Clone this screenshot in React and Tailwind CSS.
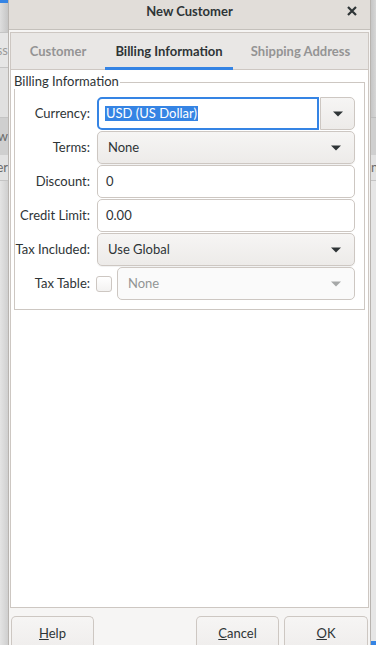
const Arrow = ({ disabled }) => (
  <svg width="10" height="6" viewBox="0 0 10 6" className="shrink-0">
    <path d="M0 0.5 L10 0.5 L5 5.5 Z" fill={disabled ? "#a6a8a8" : "#2e3436"} />
  </svg>
);

function Label({ children }) {
  return (
    <div className="h-[33px] flex items-center justify-end pr-[1px] text-[#2e3436] whitespace-nowrap">
      {children}
    </div>
  );
}

function Entry({ value }) {
  return (
    <div className="h-[33px] flex items-center rounded-[5px] border border-[#cdc7c2] bg-white pl-[8px] text-[#2e3436]">
      {value}
    </div>
  );
}

function Combo({ value, disabled }) {
  return (
    <div
      className={
        "h-[33px] flex items-center justify-between rounded-[5px] border border-[#cdc7c2] pl-[10px] pr-[13px] " +
        (disabled
          ? "bg-[#fafafa] text-[#929595]"
          : "bg-gradient-to-b from-[#f6f5f4] to-[#edebe9] text-[#2e3436] shadow-[0_1px_1px_rgba(0,0,0,0.06)]")
      }
    >
      <span>{value}</span>
      <Arrow disabled={disabled} />
    </div>
  );
}

function Btn({ children, w }) {
  return (
    <div
      className={
        "h-[34px] flex items-center justify-center rounded-t-[5px] border border-b-0 border-[#cdc7c2] bg-gradient-to-b from-[#f6f5f4] to-[#efedec] text-[#2e3436] " +
        w
      }
    >
      {children}
    </div>
  );
}

export default function App() {
  return (
    <div className="w-[376px] h-[645px] overflow-hidden flex bg-[#dcdcdc] font-['Lato',sans-serif] text-[13px] leading-[15px]">
      {/* background window, left */}
      <div className="w-[8px] shrink-0 flex flex-col bg-gradient-to-r from-[#d6d6d6] to-[#c9c9c9]">
        <div className="h-[3px] bg-[#3584e4]" />
        <div className="h-[29px] bg-gradient-to-r from-[#dedede] to-[#c6c6c6]" />
        <div className="h-[36px] border-y border-[#c4c4c4] bg-[#e6e6e6] flex items-center justify-end overflow-hidden text-[#9a9a9a]">
          <span className="whitespace-nowrap">ss</span>
        </div>
        <div className="h-[50px] bg-[#e0e0e0] border-b border-[#c4c4c4]" />
        <div className="h-[37px] bg-[#cfcfcf] flex items-center justify-end overflow-hidden text-[#6a6a6a]">
          <span className="whitespace-nowrap">ow</span>
        </div>
        <div className="h-[26px] bg-[#e2e2e2] border-b border-[#c4c4c4] flex items-center justify-end overflow-hidden text-[#6a6a6a]">
          <span className="whitespace-nowrap">er</span>
        </div>
        <div className="flex-1 bg-gradient-to-r from-[#e4e4e4] to-[#cfcfcf]" />
      </div>

      {/* dialog */}
      <div className="w-[363px] shrink-0 flex flex-col border-x border-[#b8b4b0] bg-[#f6f5f4]">
        <div className="h-[30px] shrink-0 grid grid-cols-[1fr_auto_1fr] items-center bg-[#e1ddd9] border-b border-[#c4c0bb] pb-[7px]">
          <div />
          <div className="font-bold text-[#2e3436]">New Customer</div>
          <div className="flex justify-end pr-[13px]">
            <svg width="10" height="10" viewBox="0 0 10 10">
              <path d="M1 1 L9 9 M9 1 L1 9" stroke="#2e3436" strokeWidth="2.2" />
            </svg>
          </div>
        </div>

        <div className="pt-[2px] px-[1px]">
          <div className="h-[576px] flex flex-col border border-[#cdc7c2]">
            <div className="h-[37px] shrink-0 flex bg-[#e9e7e5] font-bold">
              <div className="w-[94px] flex items-center justify-center border-b border-[#cdc7c2] text-[#949494]">
                Customer
              </div>
              <div className="w-[128px] flex items-center justify-center border-b-[3px] border-[#3584e4] text-[#2e3436] pt-[2px]">
                Billing Information
              </div>
              <div className="flex-1 flex items-center justify-center border-b border-[#cdc7c2] text-[#949494]">
                Shipping Address
              </div>
            </div>

            <div className="flex-1 bg-white pt-[4px] px-[3px]">
              <div className="flex items-stretch">
                <div className="text-[#2e3436] leading-[15px] h-[15px] pr-[1px]">Billing Information</div>
                <div className="flex-1 mt-[8px] border-t border-r border-[#cdc7c2]" />
              </div>
              <div className="border-x border-b border-[#cdc7c2] pt-[8px] pb-[9px] pr-[9px]">
                <div className="grid grid-cols-[76px_1fr] gap-x-[6px] gap-y-[1px]">
                  <Label>Currency:</Label>
                  <div className="h-[33px] flex">
                    <div className="flex-1 flex items-center rounded-l-[5px] border-2 border-[#3584e4] bg-white pl-[6px]">
                      <span className="bg-[#3584e4] text-white px-[1px]">USD (US Dollar)</span>
                    </div>
                    <div className="w-[35px] ml-[1px] flex items-center justify-center rounded-r-[5px] border border-[#cdc7c2] bg-gradient-to-b from-[#f6f5f4] to-[#edebe9]">
                      <Arrow />
                    </div>
                  </div>

                  <Label>Terms:</Label>
                  <Combo value="None" />

                  <Label>Discount:</Label>
                  <Entry value="0" />

                  <Label>Credit Limit:</Label>
                  <Entry value="0.00" />

                  <Label>Tax Included:</Label>
                  <Combo value="Use Global" />

                  <Label>Tax Table:</Label>
                  <div className="flex items-center gap-[5px] -ml-[1px]">
                    <div className="w-[16px] h-[16px] shrink-0 rounded-[3px] border border-[#cdc7c2] bg-gradient-to-b from-white to-[#f3f2f1]" />
                    <div className="flex-1">
                      <Combo value="None" disabled />
                    </div>
                  </div>
                </div>
              </div>
            </div>
          </div>
        </div>

        <div className="pt-[8px] px-[2px] flex">
          <Btn w="w-[83px]">
            <span><span className="underline">H</span>elp</span>
          </Btn>
          <div className="flex-1" />
          <Btn w="w-[83px]">
            <span><span className="underline">C</span>ancel</span>
          </Btn>
          <div className="w-[5px]" />
          <Btn w="w-[84px]">
            <span><span className="underline">O</span>K</span>
          </Btn>
        </div>
      </div>

      {/* background window, right */}
      <div className="flex-1 flex flex-col bg-gradient-to-r from-[#c8c8c8] to-[#dadada]">
        <div className="h-[118px] bg-gradient-to-r from-[#c6c6c6] to-[#dedede] border-b border-[#bdbdbd]" />
        <div className="h-[37px] bg-[#cfcfcf]" />
        <div className="h-[26px] bg-[#e2e2e2] border-b border-[#c4c4c4] flex items-center overflow-hidden text-[#6a6a6a]">
          <span className="whitespace-nowrap">n</span>
        </div>
        <div className="flex-1 bg-[#e6e6e6]" />
        <div className="h-[4px] bg-[#3584e4]" />
      </div>
    </div>
  );
}
